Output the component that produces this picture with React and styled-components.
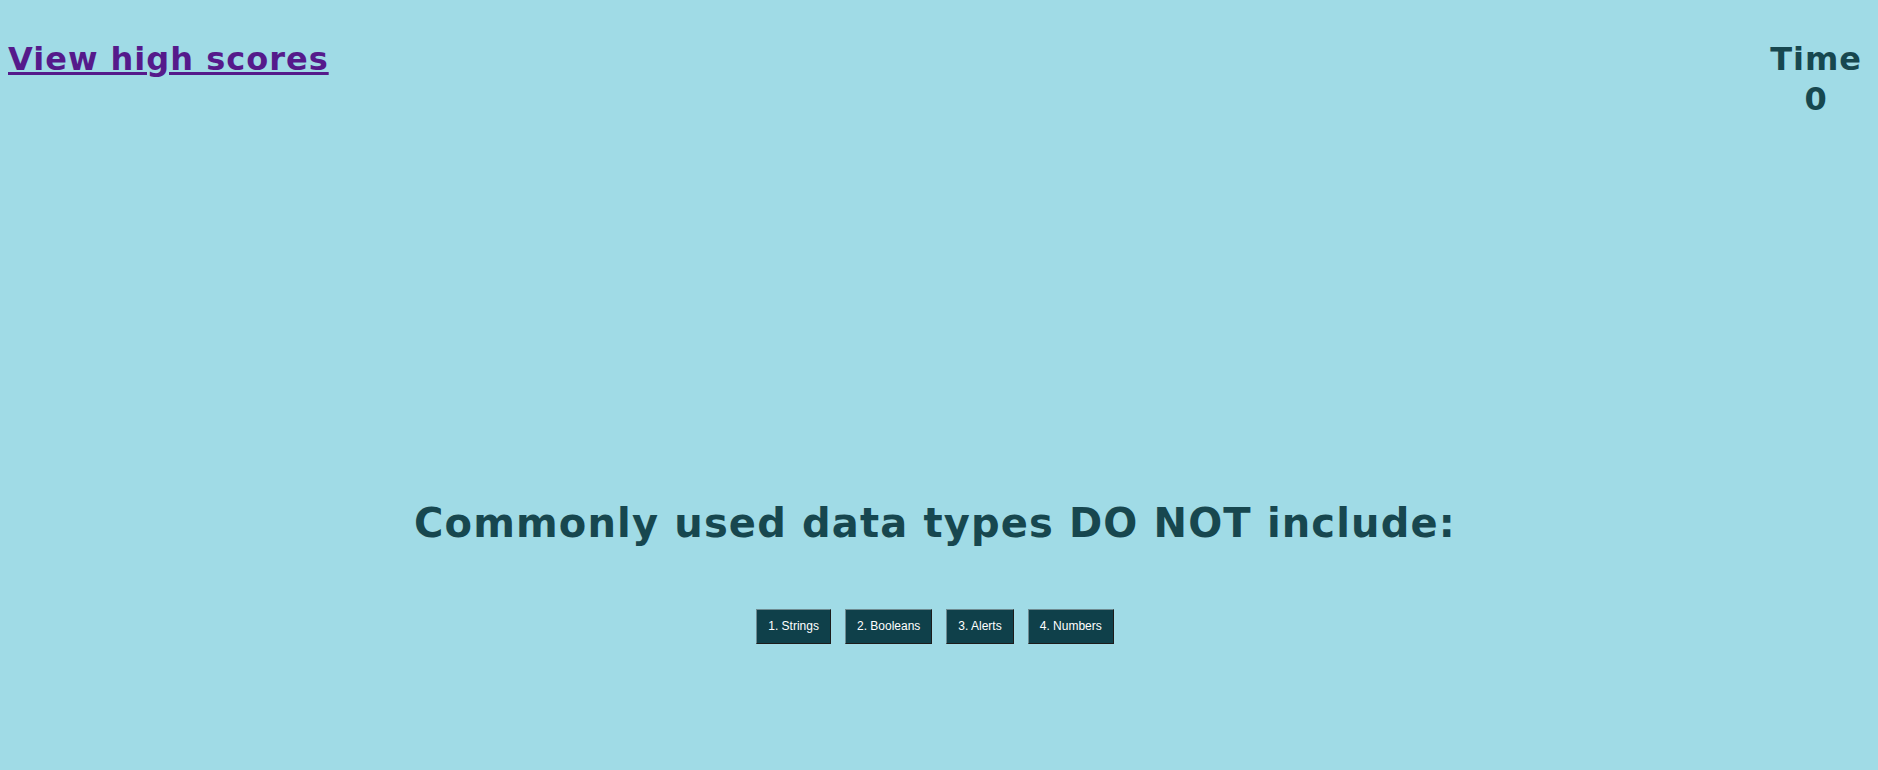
import React from "react";
import styled, { createGlobalStyle } from "styled-components";

const Global = createGlobalStyle`
  html, body {
    margin: 0;
    padding: 0;
    background: #a0dbe6;
    min-height: 100%;
  }
  body {
    font-family: "DejaVu Sans", Verdana, sans-serif;
  }
`;

const Page = styled.div`
  min-height: 770px;
  padding: 0 16px 0 8px;
  box-sizing: border-box;
  background: #a0dbe6;
`;

const Header = styled.header`
  display: flex;
  justify-content: space-between;
  align-items: flex-start;
  padding-top: 39px;
`;

const ScoresLink = styled.a`
  font-family: "DejaVu Sans", Verdana, sans-serif;
  font-size: 32px;
  font-weight: bold;
  line-height: 40px;
  letter-spacing: 1px;
  color: #551a8b;
  text-decoration: underline;
  cursor: pointer;
`;

const Timer = styled.div`
  font-size: 32px;
  font-weight: bold;
  line-height: 40px;
  letter-spacing: 1px;
  color: #17474f;
  text-align: center;
`;

const Main = styled.main`
  display: flex;
  flex-direction: column;
  align-items: center;
  margin-top: 381px;
`;

const Question = styled.h1`
  margin: 0;
  font-size: 40px;
  font-weight: bold;
  letter-spacing: 1.15px;
  color: #17474f;
  text-align: center;
`;

const Choices = styled.div`
  display: flex;
  justify-content: center;
  gap: 14px;
  margin-top: 63px;
`;

const Choice = styled.button`
  font-family: "Liberation Sans", Arial, sans-serif;
  font-size: 12px;
  line-height: 13px;
  padding: 10px 11px;
  color: #ffffff;
  background: #0f404a;
  border: 1px solid;
  border-color: #6f8c92 #1c1c1c #1c1c1c #6f8c92;
  cursor: pointer;
`;

const answers = ["1. Strings", "2. Booleans", "3. Alerts", "4. Numbers"];

export default function App() {
  return (
    <>
      <Global />
      <Page>
        <Header>
          <ScoresLink href="#">View high scores</ScoresLink>
          <Timer>
            <div>Time</div>
            <div>0</div>
          </Timer>
        </Header>
        <Main>
          <Question>Commonly used data types DO NOT include:</Question>
          <Choices>
            {answers.map((a) => (
              <Choice key={a}>{a}</Choice>
            ))}
          </Choices>
        </Main>
      </Page>
    </>
  );
}
